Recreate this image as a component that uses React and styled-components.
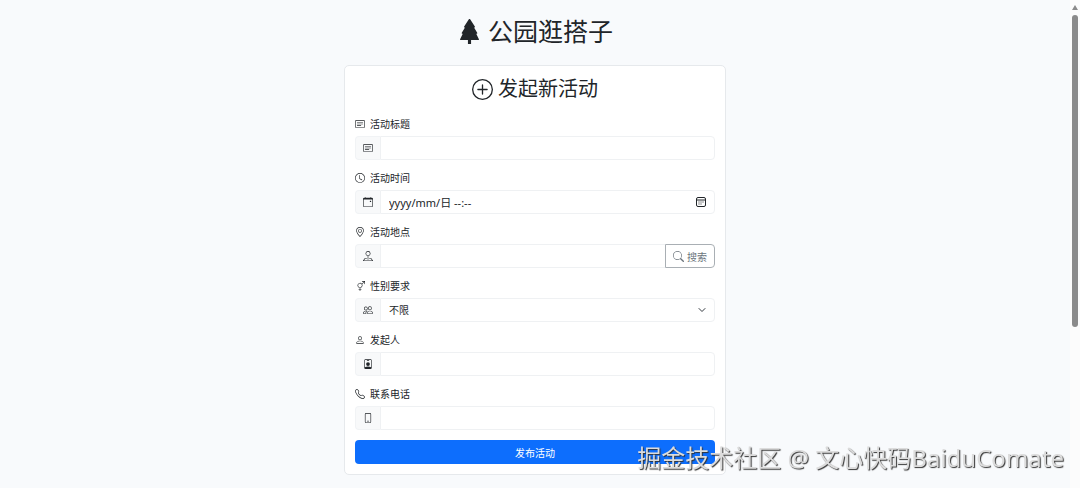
import React, { useState } from 'react';
import styled, { createGlobalStyle } from 'styled-components';
import {
    BsTreeFill,
    BsPlusCircle,
    BsCardText,
    BsClock,
    BsCalendarEvent,
    BsGeoAlt,
    BsPinMap,
    BsGenderAmbiguous,
    BsPeople,
    BsPerson,
    BsPersonBadge,
    BsTelephone,
    BsPhone,
    BsSearch,
} from 'react-icons/bs';

const PickerIcon = () => (
    <svg width="10" height="10" viewBox="0 0 20 20" fill="none" stroke="#212529" strokeWidth="2">
        <rect x="1" y="1" width="18" height="18" rx="3" />
        <path d="M1 6h18" />
        <path d="M5 10h2M9 10h2M13 10h2M5 14h2M9 14h2" />
    </svg>
);

const ChevronIcon = () => (
    <svg width="8" height="8" viewBox="0 0 16 16" fill="none" stroke="#343a40" strokeWidth="2" strokeLinecap="round" strokeLinejoin="round">
        <path d="m2 5 6 6 6-6" />
    </svg>
);

const Field = ({ id, label, icon, addon, children }) => (
    <Group>
        <Label htmlFor={id}>
            {icon}
            {label}
        </Label>
        <InputGroup>
            <Addon>{addon}</Addon>
            {children}
        </InputGroup>
    </Group>
);

const App = () => {
    const [time, setTime] = useState('');
    const [gender, setGender] = useState('不限');

    return (
        <Page>
            <GlobalStyle />
            <Main>
                <Title>
                    <BsTreeFill />
                    公园逛搭子
                </Title>
                <Card onSubmit={e => e.preventDefault()}>
                    <Subtitle>
                        <BsPlusCircle size={21} />
                        发起新活动
                    </Subtitle>
                    <Field id="title" label="活动标题" icon={<BsCardText />} addon={<BsCardText />}>
                        <Input id="title" type="text" />
                    </Field>
                    <Field id="time" label="活动时间" icon={<BsClock />} addon={<BsCalendarEvent />}>
                        <Control>
                            <Input
                                id="time"
                                type="text"
                                placeholder="yyyy/mm/日 --:--"
                                value={time}
                                onChange={e => setTime(e.target.value)}
                                $large
                            />
                            <Picker type="button" aria-label="选择时间">
                                <PickerIcon />
                            </Picker>
                        </Control>
                    </Field>
                    <Field id="place" label="活动地点" icon={<BsGeoAlt />} addon={<BsPinMap />}>
                        <Input id="place" type="text" $joined />
                        <SearchButton type="button">
                            <BsSearch size={11} />
                            搜索
                        </SearchButton>
                    </Field>
                    <Field id="gender" label="性别要求" icon={<BsGenderAmbiguous />} addon={<BsPeople />}>
                        <Control>
                            <Select id="gender" value={gender} onChange={e => setGender(e.target.value)}>
                                <option>不限</option>
                                <option>男</option>
                                <option>女</option>
                            </Select>
                            <Caret>
                                <ChevronIcon />
                            </Caret>
                        </Control>
                    </Field>
                    <Field id="owner" label="发起人" icon={<BsPerson />} addon={<BsPersonBadge />}>
                        <Input id="owner" type="text" />
                    </Field>
                    <Field id="phone" label="联系电话" icon={<BsTelephone />} addon={<BsPhone />}>
                        <Input id="phone" type="tel" />
                    </Field>
                    <Submit type="submit">发布活动</Submit>
                </Card>
            </Main>
            <ScrollTrack aria-hidden="true">
                <ScrollArrow />
                <ScrollThumb />
            </ScrollTrack>
            <Watermark>掘金技术社区 @ 文心快码BaiduComate</Watermark>
        </Page>
    );
}

const GlobalStyle = createGlobalStyle`
    * {
        box-sizing: border-box;
    }
    body {
        margin: 0;
        background-color: #f8fafc;
        color: #212529;
        font-family: "Noto Sans", "Noto Sans CJK SC", sans-serif;
        font-size: 10px;
    }
    button, input, select {
        font: inherit;
        color: inherit;
    }
`

const Page = styled.div`
    display: grid;
    grid-template-columns: minmax(0, 1fr) 10px;
    min-height: 100vh;
`

const Main = styled.main`
    display: flex;
    flex-direction: column;
    align-items: center;
    padding: 15px 10px 12px;
`

const Title = styled.h1`
    display: flex;
    align-items: center;
    gap: 6px;
    margin: 0 0 18px;
    font-size: 25px;
    font-weight: 400;
    line-height: 32px;
`

const Card = styled.form`
    width: 100%;
    max-width: 382px;
    padding: 10px;
    background-color: #fff;
    border: 1px solid #e6e9ec;
    border-radius: 5px;
`

const Subtitle = styled.h2`
    display: flex;
    align-items: center;
    justify-content: center;
    gap: 5px;
    margin: 0 0 14px;
    font-size: 20px;
    font-weight: 400;
    line-height: 26px;
`

const Group = styled.div`
    margin-bottom: 10px;
`

const Label = styled.label`
    display: flex;
    align-items: center;
    gap: 5px;
    margin-bottom: 4px;
    line-height: 16px;
`

const InputGroup = styled.div`
    display: flex;
    height: 24px;
`

const Addon = styled.span`
    display: flex;
    align-items: center;
    justify-content: center;
    width: 25px;
    background-color: #f8f9fa;
    border: 1px solid #f1f3f5;
    border-right: none;
    border-radius: 4px 0 0 4px;
`

const Control = styled.div`
    display: flex;
    flex: 1;
    position: relative;
`

const Input = styled.input`
    flex: 1;
    min-width: 0;
    padding: 0 8px;
    font-size: ${props => props.$large ? '11px' : '10px'};
    background-color: #fff;
    border: 1px solid #eff1f3;
    border-right-width: ${props => props.$joined ? '0' : '1px'};
    border-radius: ${props => props.$joined ? '0' : '0 4px 4px 0'};
    outline: none;
    &::placeholder{
        color: #212529;
        opacity: 1;
    }
    &:focus{
        border-color: #86b7fe;
    }
`

const Select = styled.select`
    flex: 1;
    appearance: none;
    padding: 0 24px 0 8px;
    background-color: #fff;
    border: 1px solid #eff1f3;
    border-radius: 0 4px 4px 0;
    outline: none;
`

const Picker = styled.button`
    position: absolute;
    top: 0;
    right: 9px;
    display: flex;
    align-items: center;
    height: 100%;
    padding: 0;
    background: none;
    border: none;
    cursor: pointer;
`

const Caret = styled.span`
    position: absolute;
    top: 0;
    right: 9px;
    display: flex;
    align-items: center;
    height: 100%;
    pointer-events: none;
`

const SearchButton = styled.button`
    display: flex;
    align-items: center;
    justify-content: center;
    gap: 3px;
    width: 50px;
    padding: 0;
    color: #6c757d;
    background-color: #fff;
    border: 1px solid #a9afb4;
    border-radius: 0 4px 4px 0;
    cursor: pointer;
`

const Submit = styled.button`
    display: block;
    width: 100%;
    height: 24px;
    padding: 0;
    color: #fff;
    background-color: #0d6efd;
    border: none;
    border-radius: 4px;
    cursor: pointer;
    &:hover{
        background-color: #0b5ed7;
    }
`

const ScrollTrack = styled.div`
    display: flex;
    flex-direction: column;
    align-items: center;
    gap: 5px;
    padding-top: 5px;
    background-color: #fcfcfc;
`

const ScrollArrow = styled.span`
    border: 3px solid transparent;
    border-top: none;
    border-bottom: 5px solid #8b8b8b;
`

const ScrollThumb = styled.span`
    width: 6px;
    height: 64vh;
    background-color: #8b8b8b;
    border-radius: 3px;
`

const Watermark = styled.div`
    position: fixed;
    right: 16px;
    bottom: 13px;
    color: #dcdcdc;
    font-size: 24px;
    line-height: 34px;
    white-space: nowrap;
    text-shadow: 1px 1px 1px #333;
    pointer-events: none;
`

export default App;
